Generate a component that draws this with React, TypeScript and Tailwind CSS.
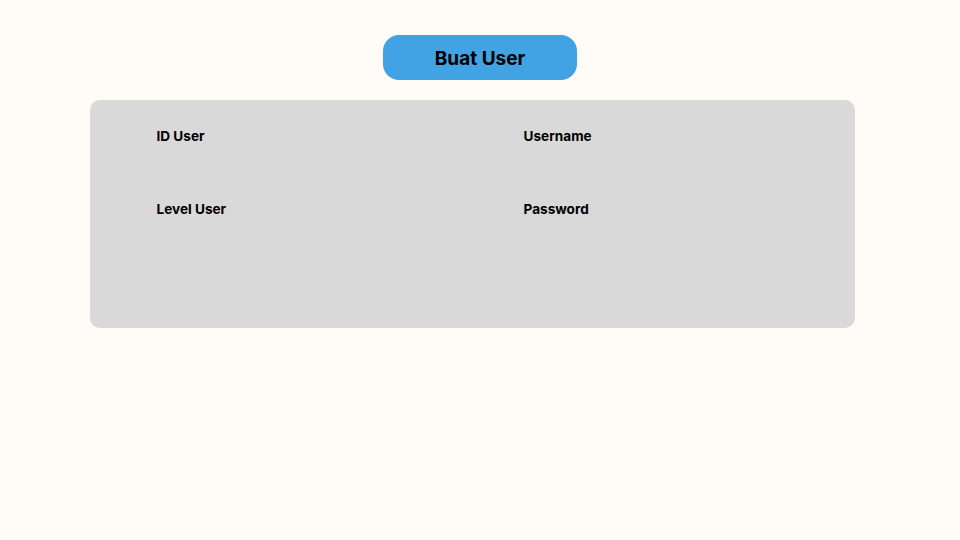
export default function App() {
  return (
    <div className="min-h-[540px] w-full bg-[#FFFBF6] flex flex-col items-center pt-[35px]" style={{ fontFamily: "Inter, 'Noto Sans', sans-serif" }}>
      <button className="w-[194px] h-[45px] rounded-[16px] bg-[#41A3E3] text-black text-[19px] font-bold flex items-center justify-center pt-[3px]">
        Buat User
      </button>
      <div className="mt-[20px] mr-[16px] w-[765px] h-[228px] rounded-[10px] bg-[#D9D9D9] pl-[67px] pt-[28px]">
        <div className="grid grid-cols-[367px_1fr] gap-y-[57px] text-[13.6px] font-bold text-black leading-[16px]">
          <div>ID User</div>
          <div>Username</div>
          <div>Level User</div>
          <div>Password</div>
        </div>
      </div>
    </div>
  );
}
